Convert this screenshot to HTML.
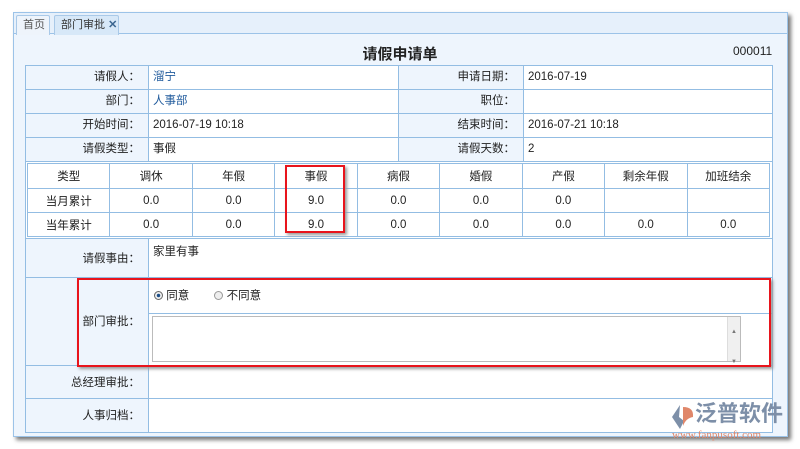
<!DOCTYPE html>
<html><head><meta charset="utf-8"><style>
*{margin:0;padding:0;box-sizing:border-box}
body{width:800px;height:449px;background:#fff;font-family:"Liberation Sans","Noto Sans CJK SC",sans-serif;font-size:11.5px;color:#222;position:relative;overflow:hidden}
.frame{position:absolute;left:13px;top:12px;width:775px;height:425px;background:#eef5fd;border:1px solid #9cc3e8;box-shadow:3px 3px 4px #777}
.tabbar{position:absolute;left:0;top:0;right:0;height:21px;background:#e6f0fb;border-bottom:1px solid #9cc3e8}
.tab{position:absolute;top:2px;height:20px;border:1px solid #a9c9e8;border-bottom:none;background:#eef4fb;color:#555;line-height:18px;font-size:11px;padding-left:6px;border-radius:2px 2px 0 0}
.tab.act{background:#d7e8f8;color:#333}
.abs{position:absolute}
.l{background:#eef5fd;text-align:right;padding-right:8px}
.cell{position:absolute;border:1px solid #93bde3;line-height:22px}
.v{background:#fff;padding-left:4px}
.red{position:absolute;border:2px solid #e8141c;box-shadow:2px 2px 3px #999}
td{border:1px solid #93bde3;width:82.5px;padding:0}
</style></head><body>
<div class="frame">
<div class="tabbar">
<div class="tab" style="left:2px;width:34px">首页</div>
<div class="tab act" style="left:40px;width:65px">部门审批 <b style="color:#3a6590">✕</b></div>
</div>
</div>
<div class="abs" style="left:0;width:800px;top:43px;text-align:center;font-size:15px;font-weight:bold;color:#222">请假申请单</div>
<div class="abs" style="left:733px;top:44px;font-size:12px">000011</div>
<div class="abs" style="left:25px;top:65px;width:748px;height:368px;background:#fff;border:1px solid #93bde3"></div>

<div class="cell l" style="left:25px;top:65px;width:124px;height:25px">请假人：</div>
<div class="cell v" style="left:148px;top:65px;width:251px;height:25px;color:#1f5a9c">溜宁</div>
<div class="cell l" style="left:398px;top:65px;width:126px;height:25px">申请日期：</div>
<div class="cell v" style="left:523px;top:65px;width:250px;height:25px">2016-07-19</div>
<div class="cell l" style="left:25px;top:89px;width:124px;height:25px">部门：</div>
<div class="cell v" style="left:148px;top:89px;width:251px;height:25px;color:#1f5a9c">人事部</div>
<div class="cell l" style="left:398px;top:89px;width:126px;height:25px">职位：</div>
<div class="cell v" style="left:523px;top:89px;width:250px;height:25px"></div>
<div class="cell l" style="left:25px;top:113px;width:124px;height:25px">开始时间：</div>
<div class="cell v" style="left:148px;top:113px;width:251px;height:25px">2016-07-19 10:18</div>
<div class="cell l" style="left:398px;top:113px;width:126px;height:25px">结束时间：</div>
<div class="cell v" style="left:523px;top:113px;width:250px;height:25px">2016-07-21 10:18</div>
<div class="cell l" style="left:25px;top:137px;width:124px;height:25px">请假类型：</div>
<div class="cell v" style="left:148px;top:137px;width:251px;height:25px">事假</div>
<div class="cell l" style="left:398px;top:137px;width:126px;height:25px">请假天数：</div>
<div class="cell v" style="left:523px;top:137px;width:250px;height:25px">2</div>

<table class="abs" style="left:27px;top:163px;width:743px;border-collapse:collapse;text-align:center;background:#fff">
<tr style="height:25px"><td>类型</td><td>调休</td><td>年假</td><td>事假</td><td>病假</td><td>婚假</td><td>产假</td><td>剩余年假</td><td>加班结余</td></tr>
<tr style="height:24px"><td>当月累计</td><td>0.0</td><td>0.0</td><td>9.0</td><td>0.0</td><td>0.0</td><td>0.0</td><td></td><td></td></tr>
<tr style="height:24px"><td>当年累计</td><td>0.0</td><td>0.0</td><td>9.0</td><td>0.0</td><td>0.0</td><td>0.0</td><td>0.0</td><td>0.0</td></tr>
</table>

<div class="cell l" style="left:25px;top:238px;width:124px;height:40px;line-height:40px">请假事由：</div>
<div class="cell v" style="left:148px;top:238px;width:625px;height:40px;line-height:26px">家里有事</div>
<div class="cell l" style="left:25px;top:277px;width:124px;height:89px;line-height:89px">部门审批：</div>
<div class="cell v" style="left:148px;top:277px;width:625px;height:37px;line-height:36px;padding-left:5px"><span style="display:inline-block;width:9px;height:9px;border-radius:50%;border:1px solid #666;background:radial-gradient(#1c4d86 30%,#eee 40%);vertical-align:-1px"></span> 同意 <span style="display:inline-block;width:22px"></span><span style="display:inline-block;width:9px;height:9px;border-radius:50%;border:1px solid #999;background:#eee;vertical-align:-1px"></span> 不同意</div>
<div class="cell v" style="left:148px;top:313px;width:625px;height:53px"></div>
<div class="abs" style="left:152px;top:316px;width:589px;height:46px;border:1px solid #bbb;background:#fff"><div class="abs" style="right:0;top:0;width:13px;height:44px;background:#f0f0f0;border-left:1px solid #ddd;font-size:6px;color:#777;text-align:center;line-height:30px">▲<br>▼</div></div>
<div class="cell l" style="left:25px;top:365px;width:124px;height:34px;line-height:34px">总经理审批：</div>
<div class="cell v" style="left:148px;top:365px;width:625px;height:34px"></div>
<div class="cell l" style="left:25px;top:398px;width:124px;height:35px;line-height:35px">人事归档：</div>
<div class="cell v" style="left:148px;top:398px;width:625px;height:35px"></div>

<div class="red" style="left:285px;top:165px;width:60px;height:68px"></div>
<div class="red" style="left:77px;top:278px;width:694px;height:89px"></div>

<svg class="abs" style="left:670px;top:404px" width="26" height="26"><path d="M10 1 L2 13 L10 25 L14 17 L9 13 Z" fill="#7d8fa8"/><path d="M13 3 Q24 3 23 13 Q16 14 13 22 Z" fill="#e0876a"/></svg>
<div class="abs" style="left:695px;top:401px;font-size:22px;font-weight:bold;color:#7d8fa8;line-height:26px">泛普软件</div>
<div class="abs" style="left:672px;top:429px;font-size:11px;color:#e0876a;font-family:'Liberation Serif',serif">www.fanpusoft.com</div>
</body></html>
